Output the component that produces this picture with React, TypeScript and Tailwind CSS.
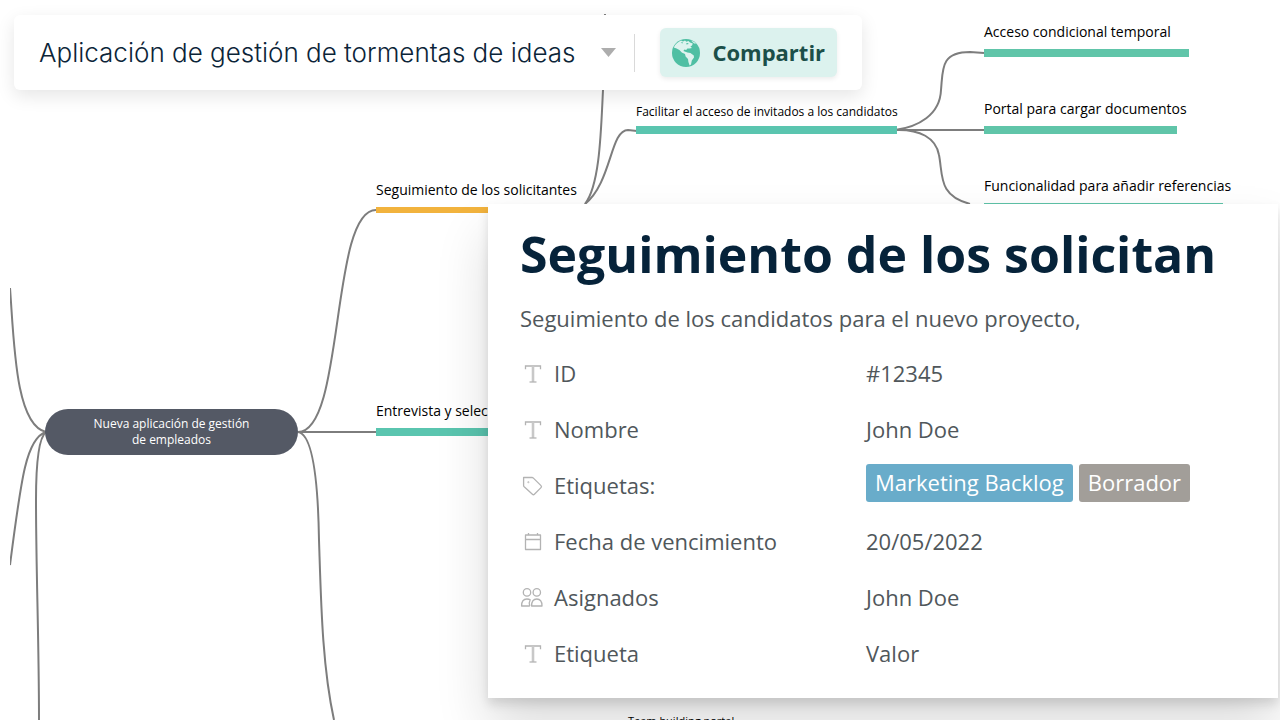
import type { ReactNode } from "react";
import { clsx } from "clsx";

const CONNECTORS = [
  // root, left side
  "M10 288 C14 340 15 425 46 432",
  "M46 432 C26 438 21 480 10 565",
  "M46 432 C38 438 36 470 36 500 C36 570 39 640 39 720",
  // root, right side
  "M298 432 C345 432 330 210 376 210",
  "M298 432 H376",
  "M298 432 C312 434 318 478 319 540 C321 600 322 665 334 720",
  // applicant tracking
  "M605 14 L603 90 C601 130 600 185 585 204",
  "M585 204 C612 182 610 130 628 130 L637 131",
  // guest access
  "M895 130 C918 127 940 115 941 90 C943 70 940 52 970 52 L984 53",
  "M895 130 H984",
  "M895 130 C920 129 936 138 939 155 C943 175 938 196 970 204",
];

function Connectors() {
  return (
    <svg
      className="absolute left-0 top-0 h-[720px] w-[1280px]"
      viewBox="0 0 1280 720"
      fill="none"
      stroke="#7d7d7d"
      strokeWidth="2"
      aria-hidden="true"
    >
      <clipPath id="canvas-edge">
        <rect x="10" y="14" width="1268" height="706" />
      </clipPath>
      <g clipPath="url(#canvas-edge)">
        {CONNECTORS.map((d) => (
          <path key={d} d={d} />
        ))}
      </g>
    </svg>
  );
}

type Size = "xs" | "small" | "base";

interface Branch {
  label: string;
  place: string;
  bar: string;
  size?: Size;
}

const BRANCHES: Branch[] = [
  { label: "Seguimiento de los solicitantes", place: "left-[376px] top-[180px]", bar: "h-1.5 w-[205px] bg-[#f2b33d]" },
  { label: "Entrevista y selección", place: "left-[376px] top-[401px]", bar: "h-2 w-[205px] bg-[#5ac5af]" },
  { label: "Facilitar el acceso de invitados a los candidatos", place: "left-[636px] top-[102px]", bar: "h-2 w-[261px] bg-[#5ac5af]", size: "small" },
  { label: "Acceso condicional temporal", place: "left-[984px] top-[22px]", bar: "h-2 w-[205px] bg-[#60c5a9]" },
  { label: "Portal para cargar documentos", place: "left-[984px] top-[99px]", bar: "h-2 w-[193px] bg-[#60c5a9]" },
  { label: "Funcionalidad para añadir referencias", place: "left-[984px] top-[176px]", bar: "h-2 w-[239px] bg-[#60c5a9]" },
  { label: "Team building portal", place: "left-[628px] top-[711px]", bar: "h-2 w-[102px] bg-[#60c5a9]", size: "xs" },
];

function BranchNode({ label, place, bar, size = "base" }: Branch) {
  return (
    <div className={clsx("absolute whitespace-nowrap text-black", place)}>
      <p
        className={clsx(
          size === "xs" && "text-[11px] leading-5",
          size === "small" && "text-xs leading-5",
          size === "base" && "text-sm leading-5"
        )}
      >
        {label}
      </p>
      <div className={clsx(size === "base" ? "mt-[7px]" : "mt-1", bar)} />
    </div>
  );
}

function MindMap() {
  return (
    <div className="absolute inset-0 overflow-hidden">
      <Connectors />
      <div className="absolute left-[45px] top-[409px] flex h-[46px] w-[253px] items-center justify-center rounded-full bg-[#545965] text-center text-xs leading-4 text-white">
        Nueva aplicación de gestión
        <br />
        de empleados
      </div>
      {BRANCHES.map((branch) => (
        <BranchNode key={branch.label} {...branch} />
      ))}
    </div>
  );
}

function GlobeIcon() {
  return (
    <svg className="size-7 shrink-0" viewBox="0 0 28 28" aria-hidden="true">
      <circle cx="14" cy="14" r="14" fill="#4fbfa3" />
      <path
        d="M1.8 8.6 C3.4 5 6 3 9 1.6 L11 2.4 L13 1.6 L14.4 2.8 L16.4 2 L18 3.4 L20.8 4.6 L20 6.4 L18.4 7.6 L20 9 L17.4 9.6 L15.4 9.4 L14.2 11 L12.4 10.6 L11.4 12 L13.4 12.8 L15.4 13.4 L18.4 14 L21.8 16.4 L22 18.6 L19.8 21.6 L19 25.4 L17.6 26.4 L16.4 23 L16 20 L13.6 17.6 L13 15 L9.8 13.4 L7.4 11 L4.6 9.4 Z"
        fill="#dff3ef"
      />
      <path d="M19 1.4 L22.4 3 L24 5 L21.8 4.2 Z" fill="#dff3ef" />
      <path d="M8.6 3.6 L11 3.2 L10.4 4.4 Z M14 4.4 L16 4 L16.6 5 L14.6 5.4 Z" fill="#4fbfa3" />
    </svg>
  );
}

function Toolbar() {
  return (
    <header className="relative ml-3.5 flex h-[75px] w-fit items-center rounded-md bg-white px-[25px] shadow-[0_6px_18px_rgba(0,0,0,0.1)]">
      <button type="button" className="flex items-center gap-[26px] whitespace-nowrap text-[#0b2438]">
        <span className="font-[Inter,sans-serif] text-[26px] font-light leading-8">
          Aplicación de gestión de tormentas de ideas
        </span>
        <svg className="h-[9px] w-[15px]" viewBox="0 0 15 9" aria-hidden="true">
          <path d="M0 0 H15 L7.5 9 Z" fill="#adadad" />
        </svg>
      </button>
      <div className="ml-[18px] h-[38px] w-px bg-[#d9d9d9]" />
      <button
        type="button"
        className="ml-[25px] flex h-[49px] items-center gap-3 whitespace-nowrap rounded-md bg-[#dcf2ee] px-3 text-[22px] font-bold text-[#1b4f49] shadow-[0_2px_5px_rgba(0,0,0,0.08)]"
      >
        <GlobeIcon />
        Compartir
      </button>
    </header>
  );
}

function IconFrame({ children }: { children: ReactNode }) {
  return (
    <svg
      className="size-6 shrink-0"
      viewBox="0 0 24 24"
      fill="none"
      stroke="#b3b3b3"
      strokeWidth="1.3"
      strokeLinejoin="round"
      aria-hidden="true"
    >
      {children}
    </svg>
  );
}

function TypeIcon() {
  return (
    <IconFrame>
      <path d="M5.5 8.2 V5 H20.5 V8.2" strokeLinejoin="miter" />
      <path d="M13 5 V21" strokeWidth="2.6" stroke="#c8c8c8" />
      <path d="M9.5 21 H16.5" />
    </IconFrame>
  );
}

function TagIcon() {
  return (
    <IconFrame>
      <path d="M3.6 4.5 H12 Q12.8 4.5 13.4 5.1 L21 12.6 Q22 13.6 21 14.6 L14.4 21.2 Q13.4 22.2 12.4 21.2 L4.2 13.8 Q3.6 13.2 3.6 12.4 Z" />
      <circle cx="8.4" cy="9.2" r="0.3" />
    </IconFrame>
  );
}

function CalendarIcon() {
  return (
    <IconFrame>
      <path d="M5.5 6 H20.5 V20.5 H5.5 Z M5.5 10.5 H20.5 M8.5 4 V6 M17.5 4 V6" />
    </IconFrame>
  );
}

function PeopleIcon() {
  return (
    <IconFrame>
      <circle cx="7" cy="7.4" r="3.7" />
      <circle cx="16.8" cy="7.4" r="3.7" />
      <path d="M9.8 21 H1.6 C1.6 16.6 3.6 14 6.8 14 C8.2 14 9.4 14.2 10.2 14.8 Q8.6 17.6 9.8 21" />
      <path d="M11.6 21 C11.6 16.6 13.6 14 16.8 14 C20 14 22 16.6 22 21 Z" />
    </IconFrame>
  );
}

interface Field {
  label: string;
  icon: ReactNode;
  value: ReactNode;
}

const FIELDS: Field[] = [
  { label: "ID", icon: <TypeIcon />, value: "#12345" },
  { label: "Nombre", icon: <TypeIcon />, value: "John Doe" },
  {
    label: "Etiquetas:",
    icon: <TagIcon />,
    value: (
      <span className="flex gap-1.5 pb-1 text-white">
        <span className="rounded-[3px] bg-[#69acca] px-[9px] pb-0.5 leading-9">Marketing Backlog</span>
        <span className="rounded-[3px] bg-[#a29e99] px-[9px] pb-0.5 leading-9">Borrador</span>
      </span>
    ),
  },
  { label: "Fecha de vencimiento", icon: <CalendarIcon />, value: "20/05/2022" },
  { label: "Asignados", icon: <PeopleIcon />, value: "John Doe" },
  { label: "Etiqueta", icon: <TypeIcon />, value: "Valor" },
];

function DetailPanel() {
  return (
    <section className="relative ml-[488px] mr-0.5 mt-[114px] bg-white px-8 pb-[17px] pt-5 shadow-[0_6px_10px_rgba(0,0,0,0.12),0_30px_50px_rgba(0,0,0,0.14)]">
      <h1 className="whitespace-nowrap text-[50px] font-bold leading-[60px] text-[#06233a]">
        Seguimiento de los solicitan
      </h1>
      <p className="mt-5 whitespace-nowrap text-[22px] leading-7 text-[#50575b]">
        Seguimiento de los candidatos para el nuevo proyecto,
      </p>
      <dl className="mt-[13px] text-[22px] text-[#50575b]">
        {FIELDS.map((field) => (
          <div key={field.label} className="flex h-14 items-center whitespace-nowrap">
            <dt className="flex w-[346px] items-center gap-2.5">
              {field.icon}
              {field.label}
            </dt>
            <dd>{field.value}</dd>
          </div>
        ))}
      </dl>
    </section>
  );
}

export default function App() {
  return (
    <main className="relative h-screen overflow-hidden bg-white pt-[15px] font-['Open_Sans',sans-serif]">
      <MindMap />
      <Toolbar />
      <DetailPanel />
    </main>
  );
}
